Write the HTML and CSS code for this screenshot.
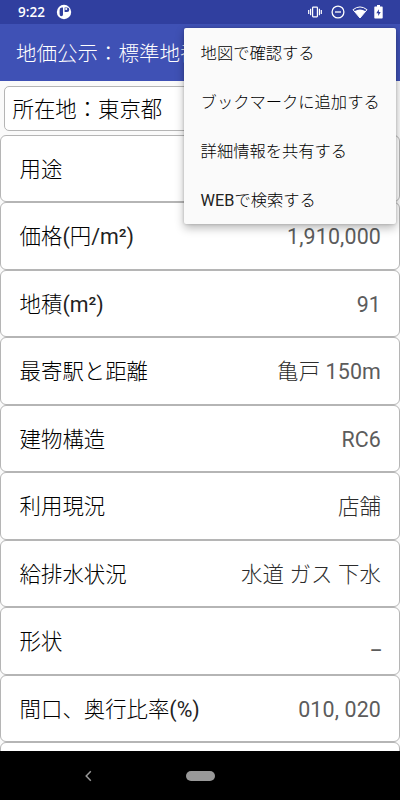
FILE: index.html
```html
<!DOCTYPE html>
<html lang="ja">
<head>
    <meta charset="UTF-8">
    <meta name="viewport" content="width=device-width, initial-scale=1.0">
    <title>地価公示</title>
    <link rel="stylesheet" href="styles.css">
</head>
<body>
    <div class="status-bar">
        <span class="clock">9:22</span>
        <svg class="app-icon" width="16" height="16" viewBox="0 0 16 16">
            <circle cx="8" cy="8" r="7.2" fill="#fff"/>
            <path d="M7 3.4H5.8Q3.6 3.8 3.6 6v4.2q.2 2 1.8 2T7 10.4zM8.6 3.5H11a2.3 2.3 0 0 1 0 4.6H8.6z" fill="#303f9f"/>
            <circle cx="10.2" cy="5" r="1.1" fill="#fff"/>
        </svg>
        <div class="status-icons">
            <svg width="14" height="12" viewBox="0 0 14 12" fill="none" stroke="#fff" stroke-width="1.2">
                <rect x="4.6" y="1.2" width="4.8" height="9.6" rx=".5"/>
                <path d="M2.6 2.7v6.6M11.4 2.7v6.6M.7 4v4M13.3 4v4"/>
            </svg>
            <svg width="14" height="14" viewBox="0 0 14 14" fill="none" stroke="#fff" stroke-width="1.3">
                <circle cx="7" cy="7" r="5.9"/>
                <path d="M4 7h6"/>
            </svg>
            <svg width="16" height="13" viewBox="0 0 16 13">
                <path d="M1 3.7Q8-1.8 15 3.7L8 12z" fill="none" stroke="#fff"/>
                <path d="M2.4 5.2Q8 1.6 13.6 5.2L8 12z" fill="#fff"/>
            </svg>
            <svg width="9" height="14" viewBox="0 0 9 14">
                <path d="M3 0h3v1.5h2q.7 0 .7.7v10.6q0 .7-.7.7H1q-.7 0-.7-.7V2.2q0-.7.7-.7h2z" fill="#fff"/>
                <path d="M4.9 4.2 2.3 8.2h1.9v2.9l2.5-4.2H4.9z" fill="#303f9f"/>
            </svg>
        </div>
    </div>
    <div class="app-bar">地価公示：標準地番</div>

    <div class="content">
        <div class="address">所在地：東京都</div>
        <div class="row"><span class="label">用途</span></div>
        <div class="row"><span class="label">価格<span class="latin">(</span>円<span class="latin">/m²)</span></span><span class="value latin">1,910,000</span></div>
        <div class="row"><span class="label">地積<span class="latin">(m²)</span></span><span class="value latin">91</span></div>
        <div class="row"><span class="label">最寄駅と距離</span><span class="value">亀戸 <span class="latin">150m</span></span></div>
        <div class="row"><span class="label">建物構造</span><span class="value latin">RC6</span></div>
        <div class="row"><span class="label">利用現況</span><span class="value">店舗</span></div>
        <div class="row"><span class="label">給排水状況</span><span class="value">水道 ガス 下水</span></div>
        <div class="row"><span class="label">形状</span><span class="value latin">_</span></div>
        <div class="row"><span class="label">間口、奥行比率<span class="latin">(%)</span></span><span class="value latin">010, 020</span></div>
        <div class="row"></div>
    </div>

    <div class="nav-bar">
        <svg class="back" width="8" height="12" viewBox="0 0 8 12">
            <path d="M6.8 1.3 2.2 6l4.6 4.7" fill="none" stroke="#999" stroke-width="1.5"/>
        </svg>
        <div class="home"></div>
    </div>

    <div class="menu">
        <div class="menu-item">地図で確認する</div>
        <div class="menu-item">ブックマークに追加する</div>
        <div class="menu-item">詳細情報を共有する</div>
        <div class="menu-item"><span class="latin">WEB</span>で検索する</div>
    </div>
</body>
</html>
```

FILE: styles.css
```css
* {
    box-sizing: border-box;
}
body {
    display: flex;
    flex-direction: column;
    height: 800px;
    margin: 0;
    overflow: hidden;
    background-color: #fafafa;
    font-family: Roboto, "Noto Sans CJK JP", sans-serif;
    font-weight: 300;
    color: #000;
}
.latin {
    font-weight: 400;
    color: #222;
}
.status-bar {
    display: flex;
    align-items: center;
    flex: none;
    height: 24px;
    padding: 0 17px 0 18px;
    background-color: #303f9f;
    color: white;
}
.clock {
    width: 38px;
    font-family: "Open Sans", sans-serif;
    font-size: 13.5px;
    font-weight: 600;
}
.status-icons {
    display: flex;
    align-items: center;
    gap: 7px;
    margin-left: auto;
}
.status-icons svg:first-child {
    margin-right: 2px;
}
.status-icons svg:last-child {
    margin-left: -1px;
}
.app-bar {
    flex: none;
    height: 57px;
    padding-left: 16px;
    background-color: #3f51b5;
    color: white;
    font-size: 20.5px;
    line-height: 61px;
    white-space: nowrap;
    overflow: hidden;
}
.content {
    flex: 1;
    min-height: 0;
    overflow: hidden;
    padding-top: 5px;
}
.address {
    height: 45px;
    margin: 0 4px 4px;
    padding-left: 7.5px;
    border: 1px solid #b5b5b5;
    border-radius: 5px;
    background-color: white;
    font-size: 21.4px;
    line-height: 45px;
}
.row {
    display: flex;
    align-items: baseline;
    justify-content: space-between;
    height: 67.44px;
    padding: 0 18px 0 18.6px;
    border: 1px solid #b5b5b5;
    border-radius: 6px;
    background-color: white;
    font-size: 21.4px;
    line-height: 68px;
}
.value {
    color: #2c2c2c;
    letter-spacing: 0.15px;
}
.value.latin, .value .latin {
    color: #5c5c5c;
}
.nav-bar {
    display: flex;
    align-items: center;
    flex: none;
    height: 49px;
    padding-left: 84px;
    background-color: black;
}
.home {
    width: 29px;
    height: 10px;
    margin-left: 94px;
    border-radius: 5px;
    background-color: #999;
}
.menu {
    position: absolute;
    top: 28px;
    left: 184px;
    width: 212px;
    height: 196px;
    border-radius: 2px;
    background-color: #fafafa;
    box-shadow: 0 4px 10px rgba(0, 0, 0, 0.28), 0 0 3px rgba(0, 0, 0, 0.2);
}
.menu-item {
    height: 49px;
    padding-left: 16.6px;
    font-size: 16.3px;
    line-height: 51px;
    white-space: nowrap;
}
```
